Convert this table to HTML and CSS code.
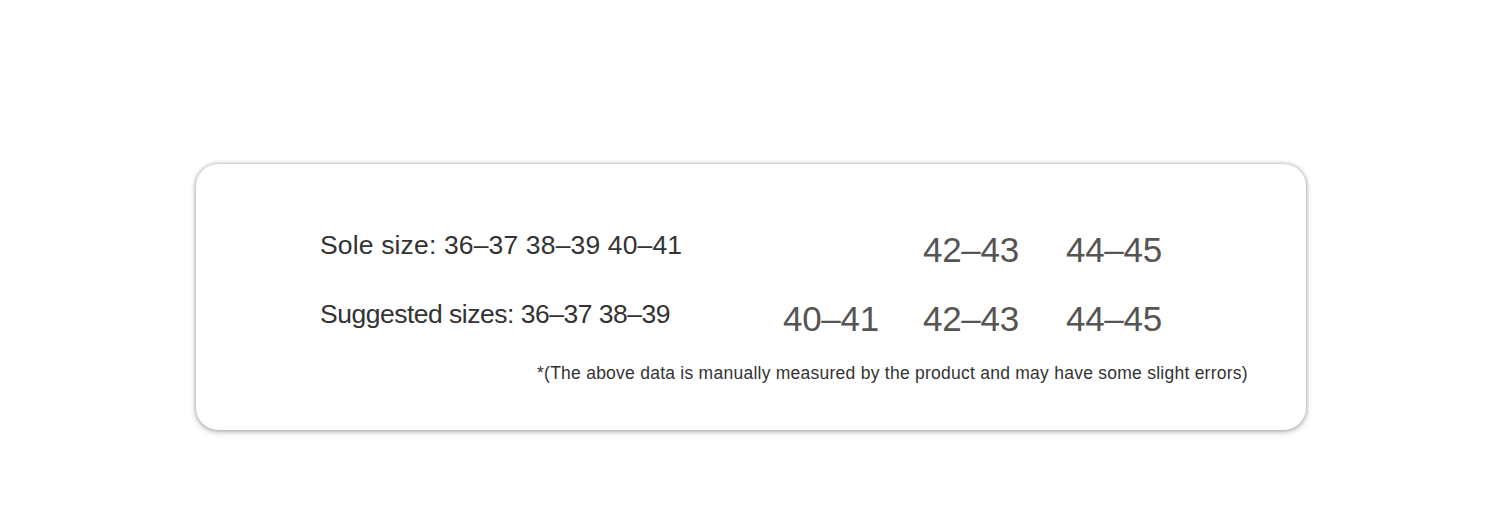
FILE: index.html
```html
<!DOCTYPE html>
<html>
<head>
<meta charset="utf-8">
<link rel="stylesheet" href="styles.css">
</head>
<body>
<div class="card">
  <div class="row">
    <div class="label label-wide">Sole size: 36–37 38–39 40–41</div>
    <div class="num c2"></div>
    <div class="num">42–43</div>
    <div class="num">44–45</div>
  </div>
  <div class="row row2">
    <div class="label label-tight">Suggested sizes: 36–37 38–39</div>
    <div class="num c2">40–41</div>
    <div class="num">42–43</div>
    <div class="num">44–45</div>
  </div>
  <div class="note">*(The above data is manually measured by the product and may have some slight errors)</div>
</div>
</body>
</html>
```
FILE: styles.css
```css
html, body {
  margin: 0;
  padding: 0;
  background: #ffffff;
}
body {
  width: 1500px;
  height: 508px;
  padding-top: 164px;
  box-sizing: border-box;
  font-family: "Liberation Sans", Arial, sans-serif;
}
.card {
  margin-left: 196px;
  width: 1110px;
  height: 266px;
  box-sizing: border-box;
  background: #fff;
  border-radius: 22px;
  box-shadow: 0 0 4px rgba(0,0,0,0.3), 0 2px 6px rgba(0,0,0,0.22);
  padding: 66px 0 0 124px;
}
.row {
  display: flex;
  align-items: flex-end;
  height: 40px;
}
.row2 {
  margin-top: 29px;
}
.label {
  width: 463px;
  font-size: 26.5px;
  line-height: 30px;
  color: #333;
  margin-bottom: 10px;
  white-space: nowrap;
}
.label-wide {
  letter-spacing: 0.15px;
}
.label-tight {
  letter-spacing: -0.5px;
}
.num {
  font-size: 35px;
  line-height: 40px;
  color: #555;
  width: 143px;
  white-space: nowrap;
  letter-spacing: -0.3px;
}
.c2 {
  width: 140px;
}
.note {
  margin-top: 24px;
  margin-left: 217px;
  font-size: 17.5px;
  line-height: 20px;
  letter-spacing: 0.25px;
  color: #333;
  white-space: nowrap;
}
```
